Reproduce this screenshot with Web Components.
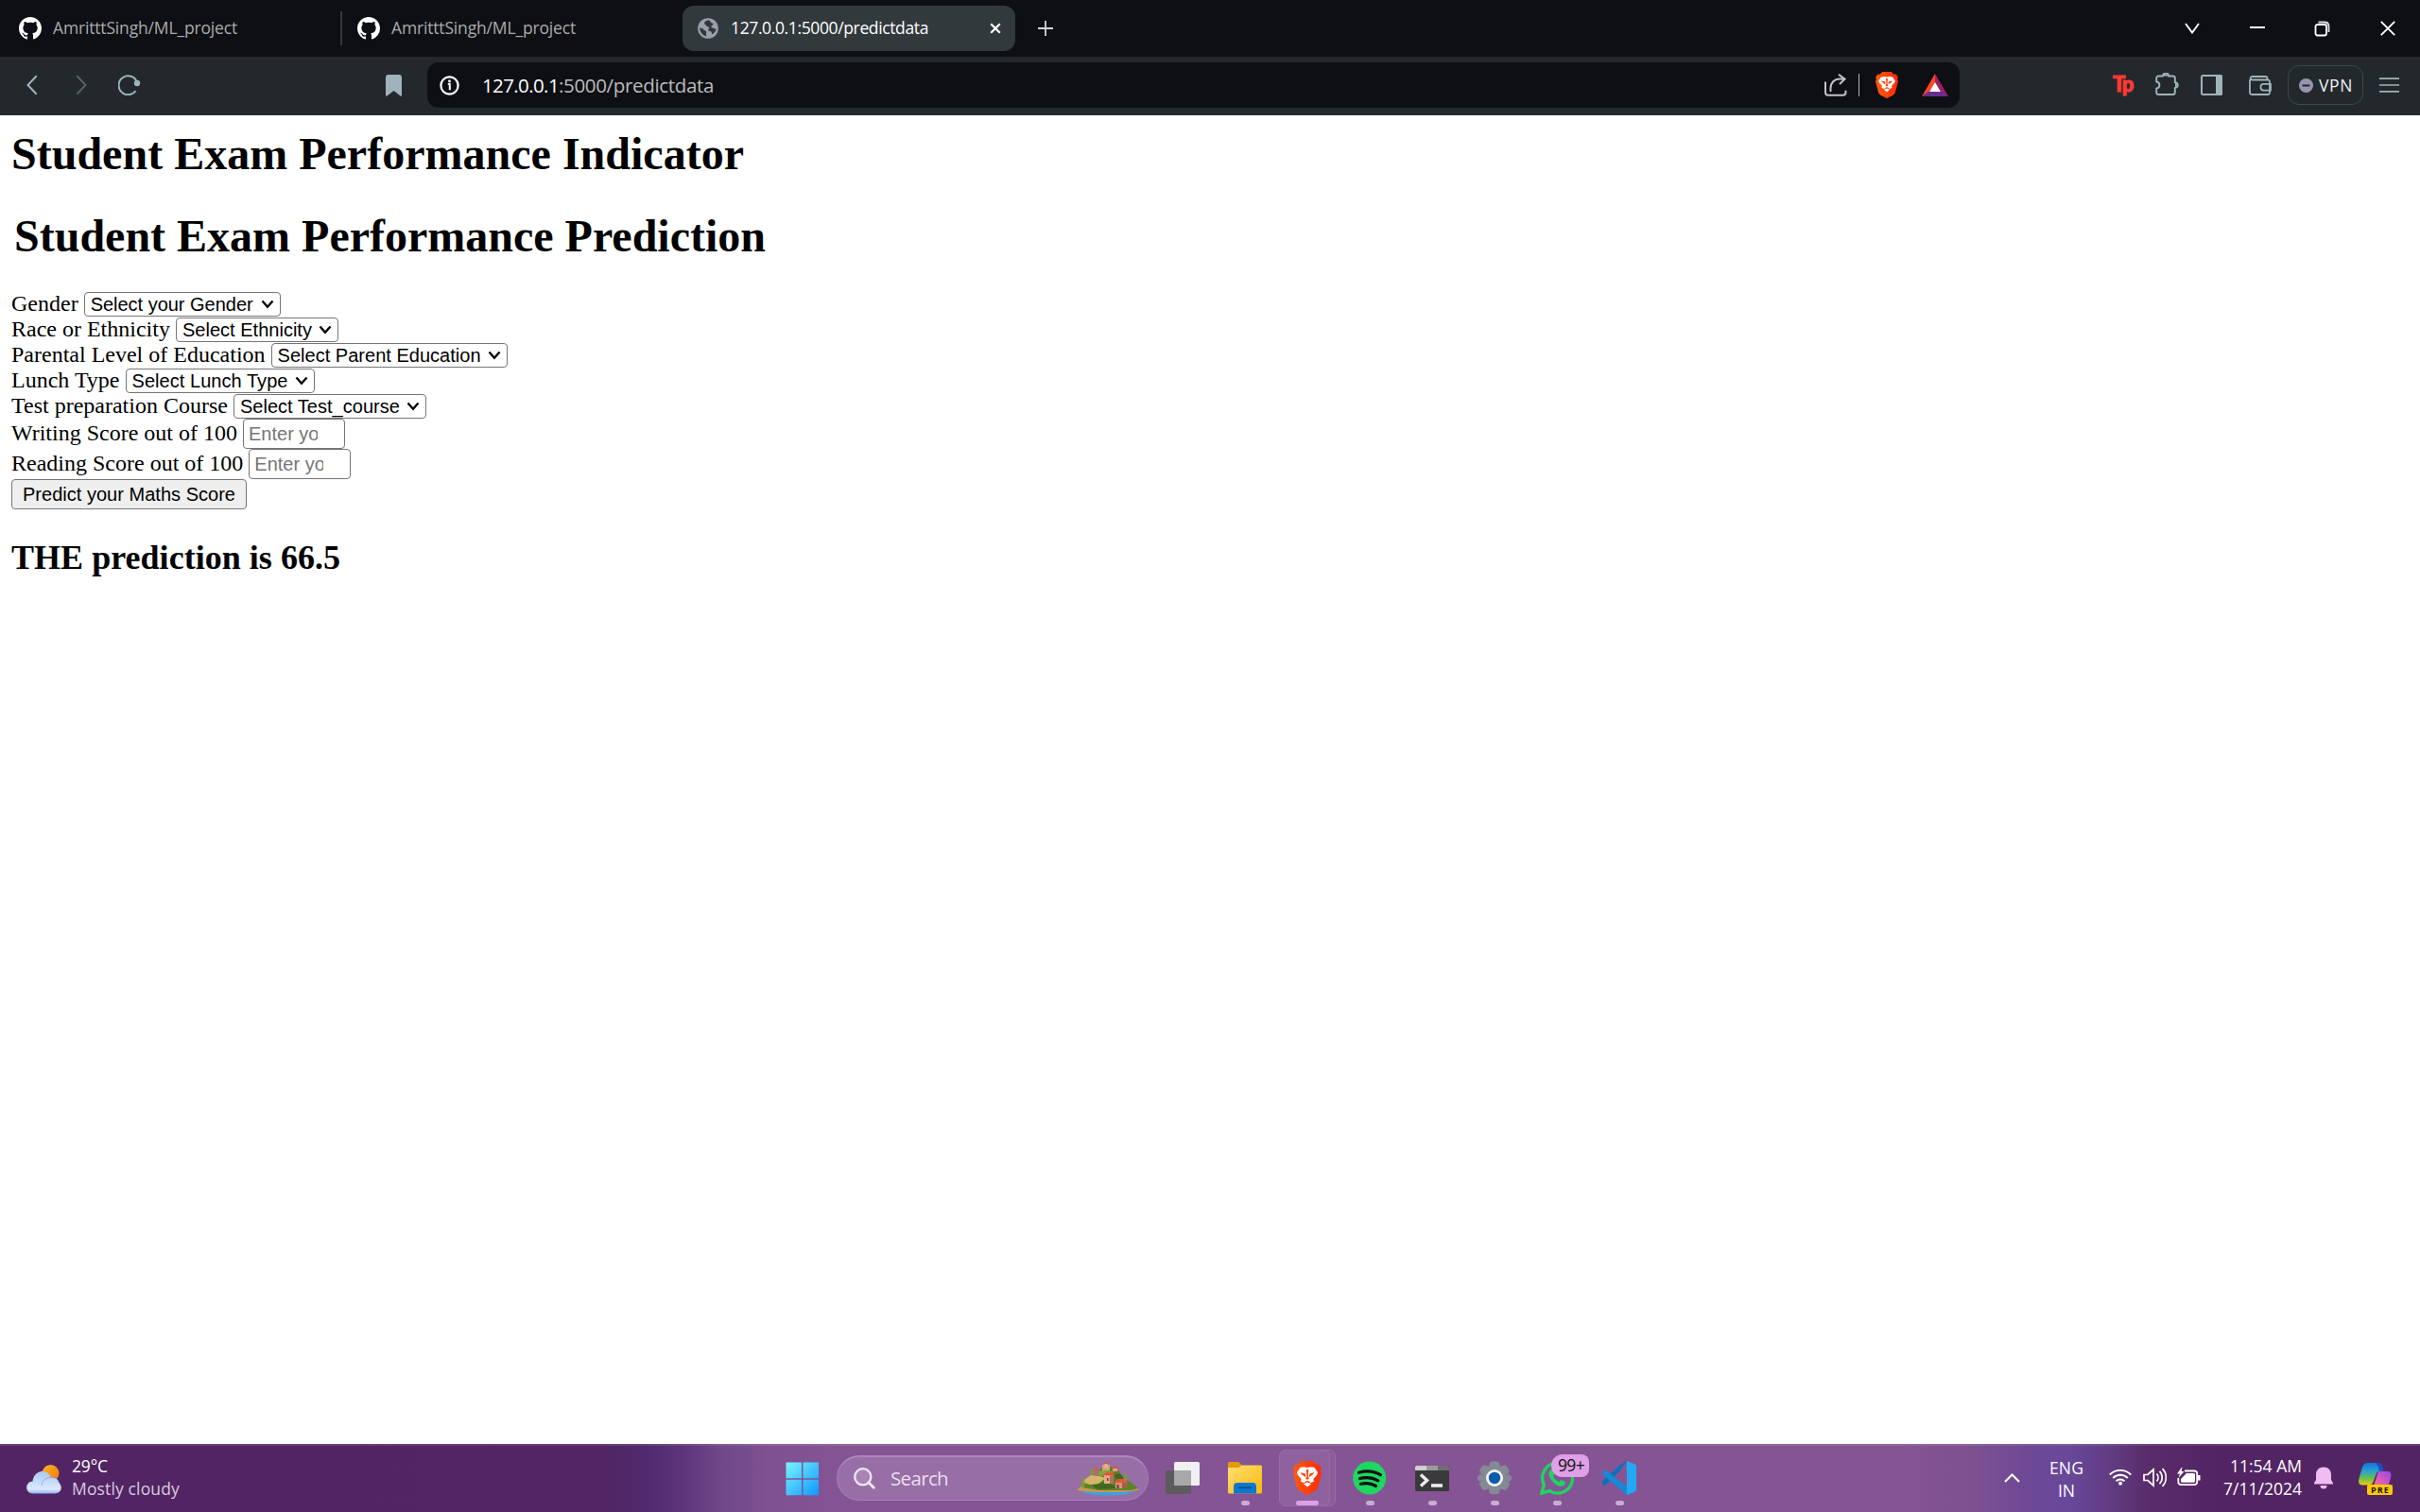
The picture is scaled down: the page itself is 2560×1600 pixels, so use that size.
<!DOCTYPE html>
<html lang="en">
<head>
<meta charset="utf-8">
<title>127.0.0.1:5000/predictdata</title>
<style>
html,body{margin:0;padding:0;background:#fff}
body{width:2560px;height:1600px;overflow:hidden}
</style>
</head>
<body>
<desktop-screen></desktop-screen>
<script>
const brave = (w,h)=>`<svg width="${w}" height="${h}" viewBox="0 0 30 36" preserveAspectRatio="none"><defs><linearGradient id="bg"><stop offset="0" stop-color="#ff5a0a"/><stop offset="1" stop-color="#ff2a0a"/></linearGradient></defs><path fill="url(#bg)" d="M9 0h12l3.2 3.4 2.6-.3 3 4-1 3.200 1.200 2.700-3.800 14.500c-.7 2.200-1.800 3.300-3.400 4.500L15 36l-7.800-4c-1.600-1.200-2.700-2.300-3.400-4.500L0 13l1.200-2.700-1-3.200 3-4 2.600.3z"/><path fill="#fff" d="M11 6.300l4 .8 4-.8 3.600.8 3.400 5-.8 2.600-3.800 4.300.5 2.800-3.700 1.400-1.300-1.700-1.900-.6-1.900.6-1.300 1.700L8 21.800l.6-2.800-3.800-4.300-.8-2.600 3.400-5zM11 24.200l4-1.700 4 1.700-4 3.300z"/><path fill="#ff4208" d="M7.500 12.300l5 1 .7 2-.4 1.800-3.800-2.900zM22.500 12.300l-5 1-.7 2 .4 1.800 3.800-2.900zM13.800 9h2.400l-.5 7.500 1.300 2.300-2 1-2-1 1.300-2.300z"/></svg>`;
const S=(w,h,b)=>`<svg width="${w}" height="${h}" viewBox="0 0 ${w} ${h}" fill="none">${b}</svg>`;
const ICONS={
github:S(24,24,`<path fill="#fff" transform="scale(1.5)" d="M8 0C3.580 0 0 3.580 0 8c0 3.540 2.290 6.530 5.470 7.590.4.070.55-.17.55-.38 0-.19-.01-.82-.01-1.490-2.010.37-2.530-.49-2.690-.94-.09-.23-.48-.94-.82-1.130-.28-.15-.68-.52-.01-.53.63-.01 1.080.58 1.230.82.72 1.210 1.870.87 2.330.66.070-.52.28-.87.51-1.070-1.780-.2-3.640-.89-3.640-3.950 0-.87.31-1.590.82-2.150-.08-.2-.36-1.020.08-2.120 0 0 .67-.21 2.200.82.64-.18 1.320-.27 2-.27s1.360.09 2 .27c1.530-1.040 2.200-.82 2.200-.82.44 1.100.16 1.920.08 2.120.51.56.82 1.270.82 2.150 0 3.070-1.870 3.750-3.650 3.950.29.25.54.73.54 1.480 0 1.070-.01 1.930-.01 2.200 0 .21.15.46.55.38A8.010 8.010 0 0016 8c0-4.420-3.580-8-8-8z"/>`),
globe:S(22,22,`<circle cx="11" cy="11" r="10.800" fill="#9aa0ab"/><path fill="#31393d" d="M12 2.200c-3 .3-5.200 1.800-4.800 3.800.3 1.400 2 1.200 2.300 2.400.2 1.300 2.200.3 2.800 1.500.6 1.400-1.600 1.800-1.200 3 .3 1 2.200.5 3.400 1.800.8 1 0 2.200 1 2.500 2.200-1.200 3.800-3.300 4-6-1.200 1-1.900-.2-3-.5-1.400-.3-2.400-.8-2-2 .3-1.200 1.800-.9 2-2.200.2-.9-1-.9-1.700-1.300-.9-.6-1.300-1.500-2.800-3zM2.200 10.500c1.800.1 3.400.6 4.300 2 .7 1.100 2.100.7 2.600 1.900.6 1.500-.9 2.400.6 4.900-4-.5-7.300-4-7.500-8.800z"/>`),
tabx:S(12,12,`<path d="M1.200 1.200l9.600 9.600M10.800 1.200l-9.600 9.600" stroke="#fff" stroke-width="2.200"/>`),
plus:S(16,16,`<path d="M8 0v16M0 8h16" stroke="#d4d5d8" stroke-width="1.800"/>`),
winv:S(16,12,`<path d="M1 1l7 9.500L15 1" stroke="#fff" stroke-width="1.900"/>`),
min:S(16,2,`<path d="M0 1h16" stroke="#fff" stroke-width="2"/>`),
restore:S(17,17,`<rect x="1.500" y="4" width="11.500" height="11.500" rx="2" stroke="#fff" stroke-width="1.800"/><path d="M4.500 1.500h6.500c3 0 4.500 1.500 4.500 4.500v6" stroke="#dcdcdd" stroke-width="1.800"/>`),
close:S(16,16,`<path d="M.8.8l14.400 14.400M15.200.8L.8 15.200" stroke="#fff" stroke-width="1.800"/>`),
back:S(12,22,`<path d="M10.700 1.200L1.500 11l9.200 9.800" stroke="#a0b3bc" stroke-width="2"/>`),
fwd:S(12,22,`<path d="M1.300 1.200L10.500 11l-9.200 9.800" stroke="#566266" stroke-width="2"/>`),
reload:S(24,22,`<path d="M18.600 17.200A10 10 0 1 1 19.800 7.500" stroke="#a0b3bc" stroke-width="2"/><circle cx="20" cy="9" r="3.200" fill="#a0b3bc"/>`),
bookmark:S(17,23,`<path d="M3 0h11a3 3 0 0 1 3 3v18.500c0 1.500-1 1.500-1.800.8L8.500 17l-6.700 5.300C1 23 0 23 0 21.500V3a3 3 0 0 1 3-3z" fill="#a0b3bc"/>`),
info:S(21,21,`<circle cx="10.500" cy="10.500" r="9.100" stroke="#fff" stroke-width="2.200"/><path d="M8.800 8.900h2v6.400" stroke="#fff" stroke-width="2"/><circle cx="10.500" cy="6" r="1.400" fill="#fff"/>`),
share:S(24,24,`<path d="M1 8.500v11.300a3 3 0 0 0 3 3h15.500a3 3 0 0 0 3-3v-2M6.500 19v-3.500c0-6 4-10 10-10h5M15 .8l6.500 4.900L16 11" stroke="#c3c3c3" stroke-width="2"/>`),
brave24:brave(24,28),
bat:S(28,24,`<path d="M14 0L0 24l7.500-4.500L14 9.500z" fill="#ff4724"/><path d="M14 0l14 24-7.500-4.500L14 9.500z" fill="#9e1f63"/><path d="M0 24h28l-7.500-5.500h-13z" fill="#662d91"/><path d="M14 9l6 10H8z" fill="#fff"/>`),
puzzle:S(25,25,`<path d="M3.500 3.500H8c.2-4 6-4 6.200 0h4.300a2.300 2.300 0 0 1 2.300 2.300v4.300c4 .3 4 5.700 0 6v4.600a2.300 2.300 0 0 1-2.300 2.300h-15A2.300 2.300 0 0 1 1.200 20.700V16.800c4.300-1 4.300-6.600 0-7.300V5.800a2.300 2.300 0 0 1 2.300-2.300z" stroke="#a0b3bc" stroke-width="1.900"/><path d="M8.500 3.500a2.700 2.700 0 0 1 5.200 0zM21 10.500a2.700 2.700 0 0 1 0 5.200z" fill="#a0b3bc"/>`),
panel:S(23,22,`<rect x="1" y="1" width="21" height="20" rx="1.500" stroke="#a0b3bc" stroke-width="2"/><path d="M16 0h5a2 2 0 0 1 2 2v18a2 2 0 0 1-2 2h-5z" fill="#a0b3bc"/>`),
wallet:S(24,21,`<path d="M1 4v13.800a2.200 2.200 0 0 0 2.200 2.200h16.600a2.200 2.200 0 0 0 2.200-2.200V6.500a2 2 0 0 0-2-2H3A1.800 1.800 0 0 1 3 1h14.500a2 2 0 0 1 2 2v1.500M23 8.800h-7.500a3 3 0 0 0-3 3v.8a3 3 0 0 0 3 3H23z" stroke="#a0b3bc" stroke-width="1.800"/>`),
vpn:S(15,15,`<circle cx="7.500" cy="7.500" r="7.500" fill="#9697af"/><path d="M3.500 7.500h8" stroke="#22282b" stroke-width="2"/>`),
menu:S(21,16,`<path d="M0 1.200h21M0 8h21M0 14.800h21" stroke="#a0b3bc" stroke-width="1.700"/>`),
weather:S(37,31,`<defs><linearGradient id="s" x1="0" y1="0" x2="1" y2="1"><stop stop-color="#f6b824"/><stop offset="1" stop-color="#ef7412"/></linearGradient><linearGradient id="c" x1="0" y1="0" x2="0" y2="1"><stop stop-color="#aac8f6"/><stop offset=".8" stop-color="#dce9fc"/><stop offset="1" stop-color="#8fb0ee"/></linearGradient></defs><circle cx="25.500" cy="9" r="9" fill="url(#s)"/><path d="M7 30.500c-9 0-9-12.500-.5-13C7.500 9.500 13 7 17 7c5 0 8 3.500 8.500 6.500 6 0 8 2.500 8.500 5 4.500 4 3.500 12-4 12z" fill="url(#c)"/><path d="M16 22c.5-5 4-8.500 9.500-8.500 6 0 8 2.500 8.500 5" stroke="#86a9ec" stroke-width="1"/>`),
win:S(36,36,`<defs><linearGradient id="w" gradientUnits="userSpaceOnUse" x1="0" y1="0" x2="36" y2="36"><stop stop-color="#7cf4ff"/><stop offset="1" stop-color="#0a95ff"/></linearGradient></defs><path fill="url(#w)" d="M1 .5h16v16.700H.5V1zM18.500.5H34.500l.5.5v16.200H18.500zM.5 18.700H17V35.200H1l-.5-.5zM18.500 18.700H35v16l-.5.500h-16z"/>`),
mag:S(23,23,`<circle cx="9.800" cy="9.800" r="8.600" fill="#ffffff28" stroke="#efe8f3" stroke-width="2.300"/><path d="M15.800 15.800l5.500 5.500" stroke="#efe8f3" stroke-width="2.800" stroke-linecap="round"/>`),
island:S(66,36,`<ellipse cx="33" cy="31" rx="27" ry="4.500" fill="#3f9fe0"/><path d="M0 29.500l4-3 6-1h46l6 1 4 3c-8 2-20 2.500-33 2.500S6 31.500 0 29.500z" fill="#c79a4b"/><path d="M5 27l6-6 9-10 7-5 8-1 9 4 5 8 9 5 7 6-8 2H24z" fill="#5d8228"/><path d="M8 19l7-5 9 1 7 2-8 6-9 1-6-2z" fill="#d8b56c"/><path d="M22 10l8-2 9 3-4 3-11 1z" fill="#87a23a"/><path d="M16 25l12-3 10 2 4 4-20 1zM46 12l5 7-8 1-4-6z" fill="#3f6a1e"/><path d="M27 3h8v6h-8z" fill="#d9a07c"/><path d="M29.500 1h3v5h-3z" fill="#e7b591"/><path d="M18 8h5v6h-5z" fill="#b26a76"/><path d="M38 6h5v4h-5z" fill="#dda27e"/><path d="M29 14h10v9H29z" fill="#e3ac88"/><path d="M35 15h4v8h-4z" fill="#b5705c"/><path d="M41 21h12v7H41z" fill="#d9957a"/><path d="M48 21h5v7h-5z" fill="#a85b4b"/><path d="M18 8l2-2h3v2zM29 1l2-1 2 1v1h-4zM38 6l2-2 4 2v1h-6zM28 14l3-3h7l2 4zM40 22l3-4h9l2 4z" fill="#e2553b"/><path d="M42.500 24h2v4h-2zM32 17h1.500v3H32z" fill="#6f3a33"/><path d="M5.500 27c-1-5 0-9 1.500-11 1.500 2 2 7 1 11zM14.500 14c-.5-4 0-6 1.500-8 1.500 2 1.500 5 1 8zM50 20c-.5-4 0-7 1.500-9 1.500 2 2 6 1 9z" fill="#7aa02b"/>`),
task:S(36,35,`<rect y="9" width="27" height="25" rx="1.500" fill="#5c5c5e"/><rect x="9" y="0" width="27" height="25" rx="1.500" fill="#f1f1f2"/><path d="M9 9h18v16H9z" fill="#a8a8aa"/>`),
folder:S(36,34,`<defs><linearGradient id="f" x1="0" y1="0" x2="1" y2="1"><stop stop-color="#ffdf70"/><stop offset="1" stop-color="#f9b80f"/></linearGradient></defs><path d="M0 1.500A1.500 1.500 0 0 1 1.500 0H11l4 3.500V12H0z" fill="#e09a0a"/><path d="M0 6h11l4-2.500h19.500A1.500 1.500 0 0 1 36 5v27a1.500 1.500 0 0 1-1.500 1.500h-33A1.500 1.500 0 0 1 0 32z" fill="url(#f)"/><path d="M6 33.500V26a4 4 0 0 1 4-4h16a4 4 0 0 1 4 4v7.500z" fill="#0d77cf"/><path d="M11 27.300h14" stroke="#0a4f94" stroke-width="1.800"/>`),
brave30:brave(30,36),
spotify:S(36,36,`<circle cx="17.700" cy="18" r="17.500" fill="#1ed760"/><path d="M6.500 12.200c7-2 16-1.500 23 2.600M7.500 18.500c6.500-1.700 13.500-1 19.300 2.300M8.500 24.300c5.500-1.200 11-.7 16 2.200" stroke="#111" stroke-width="3.200" stroke-linecap="round"/>`),
term:S(36,27,`<rect width="36" height="27" rx="1.500" fill="#3a3a3c"/><path d="M0 5V1.500A1.500 1.500 0 0 1 1.500 0H12v5z" fill="#cfcfcf"/><path d="M12 0h12v5H12z" fill="#9b9b9c"/><path d="M24 0h10.500A1.500 1.500 0 0 1 36 1.500V5H24z" fill="#6d6d6f"/><path d="M6 9.500l6.500 6L6 21.500" stroke="#ececec" stroke-width="3.400"/><path d="M17 19.200h12v3.600H17z" fill="#ececec"/>`),
gear:S(36,36,`<path fill="#838a94" d="M13.500 1c2.500-1 6.500-1 9 0l1.600 4.500 5.700-1.200c1.800 2 3 4 4 7L30.500 15v6l3.700 2.500c-.8 2.500-2.200 5.200-4.500 7.400l-5.500-1.300-1.700 5c-2.500 1-6.500 1-9 0l-1.700-5-5.500 1.300C4 28.700 2.500 26 1.800 23.500L5.500 21v-6L2 11.300c.8-2.600 2.200-5 4-7l6 1.200z"/><path fill="#838a94" d="M0 16.500l3-3 5 4.500-5 4.500-3-3zM36 16.500l-3-3-5 4.500 5 4.500 3-3z"/><circle cx="18" cy="18" r="9" fill="#f4f4f5"/><circle cx="18" cy="18" r="6.200" fill="#0b5cad"/>`),
whats:S(36,36,`<path d="M1.800 34.200l2.500-9a16 16 0 1 1 6 6.500z" stroke="#1fd45f" stroke-width="3.400"/><path d="M10 10.500c2-2.500 4-2 4.500 0l1 3.200-1.600 2.200c1.500 3 3.500 4.800 6.400 6l2.200-2 4.200 2c1 .7 0 3-1.500 4-4.500 2.500-10.500-1.500-14-7-2-3.300-2.500-6-1.200-8.400z" fill="#1fd45f"/>`),
vscode:S(36,36,`<path d="M26 0l-8 11L5.500 23.500 2 26.500l-2-2v-3L19 4z" fill="#0b70ba"/><path d="M0 12l3-2.500 23 18V36L1 15z" fill="#138bd6"/><path d="M26 0l8.500 3.500a2.500 2.500 0 0 1 1.500 2v25a2.500 2.500 0 0 1-1.500 2L26 36l-.500-26z" fill="#24a8f5"/><path d="M26 10v16l-10-8z" fill="#855494"/>`),
up:S(17,10,`<path d="M1 9l7.500-7.500L16 9" stroke="#fff" stroke-width="2"/>`),
wifi:S(24,18,`<g stroke="#fff" stroke-width="1.800"><path d="M.8 6.500a15.800 15.800 0 0 1 22.400 0M4.200 10a11 11 0 0 1 15.600 0M7.500 13.400a6.300 6.300 0 0 1 9 0"/></g><circle cx="12" cy="15.800" r="2" fill="#fff"/>`),
sound:S(25,21,`<g stroke="#fff" stroke-width="1.700"><path d="M1 7.500h4l6-5.500v17l-6-5.500H1zM14.500 6.500a6 6 0 0 1 0 8M17.500 3.800a9.500 9.500 0 0 1 0 13.400M20.500 1.200a13 13 0 0 1 0 18.600"/></g>`),
batt:S(25,21,`<path d="M8 4.500h10a3.200 3.200 0 0 1 3.200 3.200v8.300a3.200 3.200 0 0 1-3.200 3.200H4.500A3.200 3.200 0 0 1 1.300 16v-4" stroke="#fff" stroke-width="1.800"/><path d="M10 7h7.500a1.500 1.500 0 0 1 1.500 1.500v6.700a1.500 1.500 0 0 1-1.500 1.500H5.500a1.500 1.500 0 0 1-1.500-1.500V13zM22 9h2.500v5.500H22zM5.500 0L0 7.500h3L1.500 12 7.500 5H4.600z" fill="#fff"/>`),
bell:S(20,24,`<path d="M10 .5c5 0 8 3.500 8 8V14l2 3.200V18.500H0v-1.300L2 14V8.500c0-4.500 3-8 8-8zM6.500 20h7a3.500 3.500 0 0 1-7 0z" fill="#efbdf3"/>`),
copilot:S(36,35,`<defs><linearGradient id="a" x1="0" y1="0" x2="0" y2="1"><stop stop-color="#1673e0"/><stop offset=".4" stop-color="#2aa6c8"/><stop offset=".7" stop-color="#6cc04a"/><stop offset="1" stop-color="#f3c716"/></linearGradient><linearGradient id="b" x1="1" y1="0" x2="0" y2="1"><stop stop-color="#8b4bea"/><stop offset=".5" stop-color="#d957c0"/><stop offset="1" stop-color="#ff8a5c"/></linearGradient></defs><path d="M10 0h10c4 0 5 3 5.500 6l.5 3h-4c-2 0-3 1.500-3.500 3.500L15.500 20c-.700 2-2 3.500-4.500 3.500H4c-4 0-4.500-3-3.500-7L4 4.500C5 1.500 7 0 10 0z" fill="url(#a)"/><path d="M21 9h9.500c4 0 4.500 3 3.500 6.500L31 26H12c2.500 0 4-1.500 4.500-3.500L20 12z" fill="url(#b)"/><path d="M17 0h3c4 0 5 3 5.500 6l.5 3-4 0c-1-3-1.500-8-5-9z" fill="#1c4fc4"/>`),
chev:S(14,10,`<path d="M1.500 1.500L7 7.800l5.500-6.300" stroke="#000" stroke-width="2.300"/>`)
};
const define=(name,css,html,init)=>customElements.define(name,class extends HTMLElement{
  constructor(){super();this.attachShadow({mode:'open'});}
  connectedCallback(){
    const h=typeof html==='function'?html(this):html;
    this.shadowRoot.innerHTML=`<style>:host{display:block;box-sizing:border-box;flex:none}svg{display:block}${css}</style>${h}`;
    const l=this.getAttribute('gap'),t=this.getAttribute('drop');
    if(l)this.style.marginLeft=l+'px';
    if(t)this.style.marginTop=t+'px';
    if(init)init(this);
  }
});

define('ui-icon','',el=>ICONS[el.getAttribute('name')]);
/* Text run whose tracking is adjusted so that it fills a fixed measure. */
define('fit-text',':host{white-space:pre;font-family:"Open Sans","Noto Sans",sans-serif}span{display:inline-block}','<span><slot></slot></span>',el=>{
  const w=+el.getAttribute('w');
  el.style.width=w+'px';
  el.style.fontSize=el.getAttribute('size')+'px';
  const s=el.shadowRoot.querySelector('span');
  const n=el.textContent.length;
  s.style.letterSpacing=((w-s.getBoundingClientRect().width)/n)+'px';
});
define('v-rule',':host{width:2px;background:var(--c,#36383c);height:var(--h,36px)}','');

define('browser-tab',`:host{display:flex;align-items:center;height:48px;border-radius:12px;color:#a9aaac}
:host([active]){background:#31393d;color:#fff}
fit-text{line-height:24px;padding-bottom:2px}`,el=>{
  const a=el.hasAttribute('active');
  return `<ui-icon name="${a?'globe':'github'}" gap="${a?16:20}"></ui-icon><fit-text gap="${a?13:12}" w="${a?209:195}" size="17.5">${el.getAttribute('label')}</fit-text>${a?'<ui-icon name="tabx" gap="65"></ui-icon>':''}`;
},el=>el.style.width=el.getAttribute('w')+'px');

define('tab-strip',`:host{display:flex;align-items:center;height:60px;background:#0e0f14}`,`
<browser-tab label="AmritttSingh/ML_project" w="360"></browser-tab><v-rule></v-rule>
<browser-tab label="AmritttSingh/ML_project" w="344" gap="-4"></browser-tab>
<browser-tab active label="127.0.0.1:5000/predictdata" w="352" gap="20"></browser-tab>
<ui-icon name="plus" gap="24"></ui-icon>
<ui-icon name="winv" gap="1197"></ui-icon><ui-icon name="min" gap="53" drop="-2"></ui-icon><ui-icon name="restore" gap="52"></ui-icon><ui-icon name="close" gap="53"></ui-icon>`);

define('address-bar',`:host{display:flex;align-items:center;width:1621px;height:48px;background:#0e0f14;border-radius:12px;color:#fff}
fit-text{line-height:30px}.sp{flex:1}`,`
<ui-icon name="info" gap="13"></ui-icon><fit-text gap="24" w="81" size="20.5">127.0.0.1</fit-text><fit-text w="164" size="20.5" style="color:#bbbcbe">:5000/predictdata</fit-text>
<div class="sp"></div><ui-icon name="share"></ui-icon><v-rule gap="12" style="--c:#b5b5b5;--h:24px;width:1px"></v-rule><ui-icon name="brave24" gap="17"></ui-icon><ui-icon name="bat" gap="25" style="margin-right:12px"></ui-icon>`);

define('vpn-button',`:host{display:flex;align-items:center;width:80px;height:42px;border:1px solid #3d494d;border-radius:12px;color:#f1f2f3}fit-text{line-height:24px;padding-bottom:1px}`,`<ui-icon name="vpn" gap="11"></ui-icon><fit-text gap="6" w="36" size="17.500">VPN</fit-text>`);
define('tp-mark',`:host{width:23px;height:24px;display:flex;color:#fb3a33;font:900 22px/22px Lato,"Open Sans",sans-serif;letter-spacing:-1.500px;-webkit-text-stroke:1px #fb3a33;white-space:nowrap}`,`<span>Tp</span>`);

define('tool-bar',`:host{display:flex;align-items:center;height:62px;background:#22282b;padding-bottom:2px}`,`
<ui-icon name="back" gap="28"></ui-icon><ui-icon name="fwd" gap="40"></ui-icon><ui-icon name="reload" gap="33"></ui-icon><ui-icon name="bookmark" gap="259"></ui-icon>
<address-bar gap="27"></address-bar>
<tp-mark gap="162"></tp-mark><ui-icon name="puzzle" gap="22" drop="-2"></ui-icon><ui-icon name="panel" gap="23"></ui-icon><ui-icon name="wallet" gap="28"></ui-icon>
<vpn-button gap="17"></vpn-button><ui-icon name="menu" gap="17"></ui-icon>`);

define('form-row',`:host{display:flex;align-items:flex-start;height:27px;font:24px/23px "Liberation Serif",serif}
span{white-space:pre;padding-top:1px}:host([tall]){height:32px}:host([tall]) span{padding-top:4px}`,el=>`<span>${el.getAttribute('label')}</span><slot></slot>`);
define('select-box',`:host{display:flex;align-items:center;height:26px;border:1px solid #767676;border-radius:4px;font:20px/24px "Liberation Sans",sans-serif;padding:0 6px;background:#fff}
fit-text{font-family:inherit}div{flex:1}`,el=>`<fit-text w="${el.getAttribute('tw')}" size="20">${el.textContent}</fit-text><div></div><ui-icon name="chev"></ui-icon>`,el=>el.style.width=el.getAttribute('w')+'px');
define('number-input',`:host{height:32px;width:108px;border:1px solid #767676;border-radius:4px;background:#fff;padding:0 0 0 5px}
div{width:73px;overflow:hidden;white-space:nowrap;color:#757575;font:20px/30px "Liberation Sans",sans-serif}`,'<div><slot></slot></div>');
define('submit-button',`:host{width:249px;height:32px;border:1px solid #767676;border-radius:4px;background:#efefef;color:#000;padding-left:11px;line-height:30px}fit-text{font-family:"Liberation Sans",sans-serif}`,'<fit-text w="225" size="20">Predict your Maths Score</fit-text>');

define('exam-page',`:host{display:block;height:1406px;background:#fff;padding:13px 12px 0;color:#000}
fit-text{font-family:"Liberation Serif",serif;font-weight:bold}`,`
<fit-text w="775" size="48" style="line-height:56px">Student Exam Performance Indicator</fit-text>
<fit-text w="795" size="48" gap="3" style="line-height:56px;padding-top:31px;margin-bottom:31px">Student Exam Performance Prediction</fit-text>
<form-row label="Gender"><select-box w="208" tw="172">Select your Gender</select-box></form-row>
<form-row label="Race or Ethnicity"><select-box w="172" tw="137">Select Ethnicity</select-box></form-row>
<form-row label="Parental Level of Education"><select-box w="250" tw="215">Select Parent Education</select-box></form-row>
<form-row label="Lunch Type"><select-box w="200" tw="165">Select Lunch Type</select-box></form-row>
<form-row label="Test preparation Course" style="height:26px"><select-box w="204" tw="169">Select Test_course</select-box></form-row>
<form-row tall label="Writing Score out of 100"><number-input>Enter yo</number-input></form-row>
<form-row tall label="Reading Score out of 100"><number-input>Enter yo</number-input></form-row>
<submit-button></submit-button>
<fit-text w="348" size="36" style="line-height:42px;margin-top:30px">THE prediction is 66.5</fit-text>`,el=>{
  el.shadowRoot.querySelectorAll('form-row>*').forEach(c=>c.style.marginLeft='6px');
});

define('search-pill',`:host{display:flex;width:330px;height:48px;border-radius:24px;background:#976ea6;border:1px solid #a57fb3;border-top:2px solid #ac87ba;color:#e9dfee}fit-text{line-height:44px}`,`
<ui-icon name="mag" gap="17" drop="11"></ui-icon><fit-text gap="16" w="61" size="20.500">Search</fit-text><ui-icon name="island" gap="136" drop="5"></ui-icon>`);
define('task-app',`:host{width:66px;height:72px;display:flex;flex-direction:column;align-items:center;position:relative}
.ic{height:66px;display:flex;align-items:center;padding-top:6px;box-sizing:border-box;position:relative}
.dot{width:9px;height:5px;border-radius:3px;background:#c6aed0;position:relative;margin-top:-6px}
:host([active]) .dot{width:24px;background:#dfa0e8}
:host([idle]) .dot{visibility:hidden}
.tile{position:absolute;left:3px;top:6px;width:54px;height:60px;box-sizing:border-box;border-radius:7px;background:#8f629d;border:1px solid #976da4}
.t2{left:9px;background:#8b5c99}
.badge{position:absolute;left:12px;top:11px;width:40px;height:24px;border-radius:12px 8px 8px 12px;background:#dfa0e8;color:#111;padding-left:7px;box-sizing:border-box}
fit-text{line-height:23px}`,el=>`${el.hasAttribute('active')?'<div class="tile t2"></div><div class="tile"></div>':''}<div class="ic"><ui-icon name="${el.getAttribute('icon')}"></ui-icon>${el.hasAttribute('badge')?`<div class="badge"><fit-text w="28" size="17.500">${el.getAttribute('badge')}</fit-text></div>`:''}</div><div class="dot"></div>`);
define('two-lines',`:host{display:flex;flex-direction:column}`,'<slot></slot>');
define('pre-tag',`:host{width:27px;height:11px;margin-top:-12px;border-radius:2px;background:#ffc800;color:#111;font-weight:bold}fit-text{font-weight:700;line-height:11px;margin-left:4px}`,'<fit-text w="20" size="9">PRE</fit-text>');

define('task-bar',`:host{display:flex;align-items:flex-start;height:72px;color:#fff;box-shadow:inset 0 2px 0 #ffffff1c;
background:linear-gradient(90deg,#522463 0,#532564 640px,#502a6d 682px,#5d3478 722px,#6f488a 762px,#7f5192 815px,#855494 900px,#855494 2000px,#7f5191 2080px,#6d4896 2150px,#69479a 2190px,#613d84 2230px,#592b69 2275px,#522463 2350px,#522463 100%)}`,`
<ui-icon name="weather" gap="28" drop="22"></ui-icon>
<two-lines gap="11" drop="11"><fit-text w="38" size="17.500" style="line-height:24px">29°C</fit-text><fit-text w="114" size="17.500" style="line-height:24px;color:#d9cbdf">Mostly cloudy</fit-text></two-lines>
<ui-icon name="win" gap="640" drop="19"></ui-icon>
<search-pill gap="18" drop="12"></search-pill>
<task-app gap="3" icon="task" idle></task-app><task-app icon="folder"></task-app><task-app icon="brave30" active></task-app><task-app icon="spotify"></task-app><task-app icon="term"></task-app><task-app icon="gear"></task-app><task-app icon="whats" badge="99+"></task-app><task-app icon="vscode"></task-app>
<ui-icon name="up" gap="374" drop="31"></ui-icon>
<two-lines gap="31" drop="13" style="align-items:center"><fit-text w="36" size="17.500" style="line-height:24px">ENG</fit-text><fit-text w="18" size="17.500" style="line-height:24px">IN</fit-text></two-lines>
<ui-icon name="wifi" gap="27" drop="26"></ui-icon><ui-icon name="sound" gap="12" drop="25"></ui-icon><ui-icon name="batt" gap="11" drop="24"></ui-icon>
<two-lines gap="24" drop="11" style="align-items:flex-end"><fit-text w="76" size="17.500" style="line-height:24px">11:54 AM</fit-text><fit-text w="83" size="17.500" style="line-height:24px">7/11/2024</fit-text></two-lines>
<ui-icon name="bell" gap="13" drop="24"></ui-icon>
<div style="margin:20px 0 0 27px;display:flex;flex-direction:column;align-items:flex-end"><ui-icon name="copilot"></ui-icon><pre-tag></pre-tag></div>`,el=>{
  el.shadowRoot.querySelector('ui-icon[name=win]').style.marginLeft='641px';
});

define('desktop-screen',':host{display:flex;flex-direction:column;width:2560px;height:1600px;overflow:hidden}','<tab-strip></tab-strip><tool-bar></tool-bar><exam-page></exam-page><task-bar></task-bar>');
</script>
</body>
</html>
